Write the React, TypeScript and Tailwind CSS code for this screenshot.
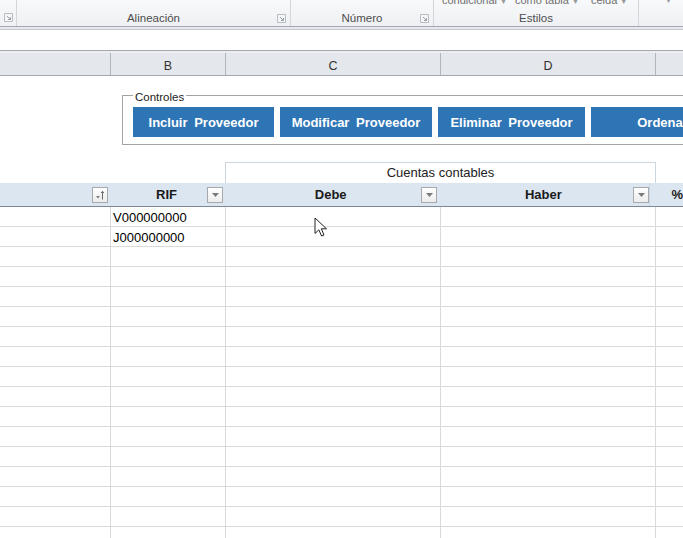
import React from "react";

function Launcher() {
  return (
    <svg width="9" height="9" viewBox="0 0 9 9" className="block">
      <path d="M0.5 0.5 H8.5 V8.5 H0.5 Z" fill="#f4f5f6" stroke="#b8bdc3" />
      <path d="M3 3 L6.5 6.5 M6.5 4 V6.5 H4" fill="none" stroke="#9aa1a8" strokeWidth="1" />
    </svg>
  );
}

function FilterBtn() {
  return (
    <div className="w-[16px] h-[16px] border border-[#a7a9ac] bg-gradient-to-b from-white to-[#ececec] flex items-center justify-center">
      <svg width="7" height="4" viewBox="0 0 7 4" className="block mt-[1px]">
        <path d="M0 0 H7 L3.5 4 Z" fill="#7a7a7a" />
      </svg>
    </div>
  );
}

function SortBtn() {
  return (
    <div className="w-[16px] h-[16px] border border-[#a7a9ac] bg-gradient-to-b from-white to-[#ececec] flex items-center justify-center">
      <svg width="12" height="12" viewBox="0 0 12 12" className="block">
        <path d="M2 7 H6 L4 9.5 Z" fill="#7a7a7a" />
        <path d="M8.5 10.5 V2.5 M7 4 L8.5 2.3 L10 4" fill="none" stroke="#6a6a6a" strokeWidth="1" />
      </svg>
    </div>
  );
}

function RibbonGroup({ w, label, launcher, children }: { w: string; label: string; launcher?: boolean; children?: React.ReactNode }) {
  return (
    <div className={`${w} h-full border-r border-[#d3d7dc] flex flex-col`}>
      <div className="h-[8px] overflow-hidden">{children}</div>
      <div className="flex-1 grid grid-cols-[1fr_auto_1fr] items-end pb-[1px]">
        <div />
        <div className="leading-[13px]">{label}</div>
        <div className="flex justify-end pr-[4px] pb-[2px]">{launcher ? <Launcher /> : null}</div>
      </div>
    </div>
  );
}

const btn = "h-[30px] shrink-0 bg-[#2e75b6] text-white font-bold text-[13px] flex items-center justify-center pt-[1px] [word-spacing:3px]";

export default function App() {
  const rows = Array.from({ length: 17 });
  const data = ["V000000000", "J000000000"];
  return (
    <div className="w-[683px] h-[538px] overflow-hidden bg-white relative font-['Liberation_Sans',Arial,sans-serif] text-[#1a1a1a]">
      {/* Ribbon */}
      <div className="h-[26px] flex bg-gradient-to-b from-[#f8f9fa] to-[#eef0f3] overflow-hidden text-[11.5px] text-[#4d4d4d]">
        <div className="w-[17px] h-full border-r border-[#d3d7dc] flex items-end justify-center pb-[4px]">
          <Launcher />
        </div>
        <RibbonGroup w="w-[274px]" label="Alineación" launcher />
        <RibbonGroup w="w-[143px]" label="Número" launcher />
        <RibbonGroup w="w-[205px]" label="Estilos">
          <div className="flex text-[11px] text-[#707070] leading-[13px] -mt-[6px] pl-[8px]">
            <span className="w-[73px]">condicional <span className="text-[7px] text-[#9a9a9a]">▼</span></span>
            <span className="w-[76px]">como tabla <span className="text-[7px] text-[#9a9a9a]">▼</span></span>
            <span>celda <span className="text-[7px] text-[#9a9a9a]">▼</span></span>
          </div>
        </RibbonGroup>
        <div className="flex-1 h-full">
          <div className="h-[8px] overflow-hidden">
            <div className="-mt-[6px] pl-[26px] text-[7px] leading-[13px] text-[#9a9a9a]">▼</div>
          </div>
        </div>
      </div>
      <div className="h-[1px] bg-[#a4aab1]" />
      <div className="h-[2px] bg-[#e6e8eb]" />
      <div className="h-[1px] bg-[#c3c8ce]" />

      {/* formula area */}
      <div className="h-[20px] bg-white" />
      <div className="h-[1px] bg-[#a3a8ae]" />
      <div className="h-[2px] bg-[#eceef0]" />

      {/* column headers */}
      <div className="h-[23px] flex bg-[#e4e7eb] border-b border-[#a3a9b0] text-[12.5px] text-[#333]">
        <div className="w-[111px] border-r border-[#b0b6bd]" />
        <div className="w-[115px] border-r border-[#b0b6bd] flex items-center justify-center pt-[4px]">B</div>
        <div className="w-[215px] border-r border-[#b0b6bd] flex items-center justify-center pt-[4px]">C</div>
        <div className="w-[215px] border-r border-[#b0b6bd] flex items-center justify-center pt-[4px]">D</div>
        <div className="flex-1" />
      </div>

      {/* sheet */}
      <div className="overflow-hidden">
        {/* Controles group box */}
        <div className="mt-[19px] ml-[122px] w-[800px] h-[50px] border border-[#a3a3a3] relative pl-[10px] pt-[11px]">
          <div className="absolute -top-[5px] left-[10px] px-[2px] bg-white text-[11.5px] leading-[13px] text-[#222]">Controles</div>
          <div className="flex gap-[6px]">
            <div className={`${btn} w-[141px]`}>Incluir Proveedor</div>
            <div className={`${btn} w-[152px]`}>Modificar Proveedor</div>
            <div className={`${btn} w-[147px]`}>Eliminar Proveedor</div>
            <div className={`${btn} w-[214px]`}>Ordenar Proveedor</div>
          </div>
        </div>

        {/* Cuentas contables */}
        <div className="mt-[17px] h-[21px] flex">
          <div className="w-[225px]" />
          <div className="w-[431px] border-t border-l border-r border-[#cbd5e0] flex items-center justify-center text-[13px] text-[#222]">
            Cuentas contables
          </div>
        </div>

        {/* Table header */}
        <div className="h-[24px] flex bg-[#dce6f1] border-b border-[#7a8796] text-[13px] font-bold text-[#1a1a1a]">
          <div className="w-[111px] flex items-center justify-end pr-[2px]">
            <SortBtn />
          </div>
          <div className="w-[115px] grid grid-cols-[1fr_auto_1fr] items-center pr-[1px]">
            <div />
            <div>RIF</div>
            <div className="flex justify-end"><FilterBtn /></div>
          </div>
          <div className="w-[215px] grid grid-cols-[1fr_auto_1fr] items-center">
            <div />
            <div>Debe</div>
            <div className="flex justify-end"><FilterBtn /></div>
          </div>
          <div className="w-[215px] grid grid-cols-[1fr_auto_1fr] items-center border-r border-[#cbd5e0]">
            <div />
            <div>Haber</div>
            <div className="flex justify-end"><FilterBtn /></div>
          </div>
          <div className="flex-1 flex items-center pl-[21px]">%</div>
        </div>

        {/* Data rows */}
        {rows.map((_, i) => (
          <div key={i} className="h-[20px] flex border-b border-[#dadada] text-[13px] text-black">
            <div className="w-[111px] border-r border-[#dadada]" />
            <div className="w-[115px] border-r border-[#dadada] pl-[2px] pt-[2px] flex items-center leading-[15px]">{data[i] ?? ""}</div>
            <div className="w-[215px] border-r border-[#dadada]" />
            <div className="w-[215px] border-r border-[#dadada]" />
            <div className="flex-1" />
          </div>
        ))}
      </div>

      {/* mouse cursor */}
      <svg className="absolute left-[314px] top-[217px]" width="14" height="21" viewBox="0 0 14 21">
        <path d="M1 1 L1 16.5 L4.8 12.8 L7.6 19 L10 18 L7.3 11.8 L12.5 11.8 Z" fill="white" stroke="#222" strokeWidth="1" strokeLinejoin="round" />
      </svg>
    </div>
  );
}
